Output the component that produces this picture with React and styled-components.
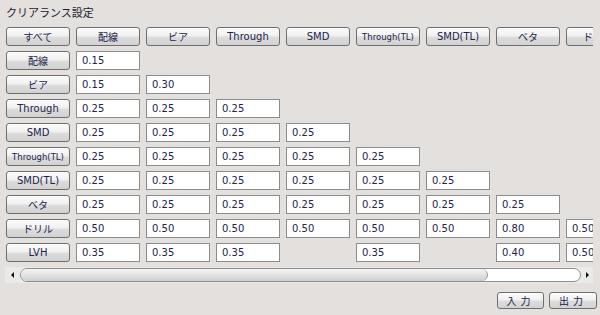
import React from "react";
import styled, { createGlobalStyle } from "styled-components";

const GlobalStyle = createGlobalStyle`
  html, body {
    margin: 0;
    padding: 0;
    background: #e3e0de;
  }
  body {
    font-family: "DejaVu Sans", "Noto Sans CJK JP", sans-serif;
    color: #23234a;
  }
`;

const Page = styled.div`
  width: 600px;
  height: 315px;
  box-sizing: border-box;
  padding: 4px 3px 0 5px;
  background: #e3e0de;
  overflow: hidden;
`;

const Title = styled.div`
  font-family: "Noto Sans CJK JP", sans-serif;
  font-size: 11px;
  line-height: 16px;
  height: 16px;
  margin-bottom: 7px;
  padding-left: 1px;
  color: #1c1c2c;
`;

const Viewport = styled.div`
  width: 588px;
  overflow: hidden;
`;

const Grid = styled.div`
  display: grid;
  grid-template-columns: repeat(9, 64px);
  grid-auto-rows: 19px;
  column-gap: 6px;
  row-gap: 5px;
  padding-left: 1px;
  width: max-content;
`;

const Btn = styled.div`
  box-sizing: border-box;
  height: ${(p) => p.$h || 19}px;
  width: ${(p) => (p.$w ? `${p.$w}px` : "auto")};
  border: 1px solid #6e6e6e;
  border-radius: 3px;
  background: linear-gradient(#fbfbfb 0%, #f1f1f1 45%, #dcdcdc 55%, #d2d2d2 100%);
  box-shadow: inset 0 1px 0 #ffffff;
  display: flex;
  align-items: center;
  justify-content: center;
  font-family: ${(p) =>
    p.$jp ? `"Noto Sans CJK JP", sans-serif` : `"DejaVu Sans", "Noto Sans CJK JP", sans-serif`};
  font-size: ${(p) => p.$fs || 10}px;
  letter-spacing: ${(p) => p.$ls || 0}px;
  color: #23234a;
  white-space: nowrap;
  overflow: hidden;
`;

const Cell = styled.div`
  box-sizing: border-box;
  height: 19px;
  border: 1px solid #8c8c8c;
  background: #ffffff;
  font-size: 10px;
  line-height: 17px;
  padding-left: 5px;
  color: #23234a;
  white-space: nowrap;
  overflow: hidden;
`;

const Empty = styled.div``;

const ScrollBar = styled.div`
  margin-top: 5px;
  width: 588px;
  height: 16px;
  background: #ebeae9;
  display: flex;
  align-items: center;
  box-sizing: border-box;
  padding: 0 4px 0 4px;
`;

const Arrow = styled.div`
  width: 0;
  height: 0;
  border-top: 3px solid transparent;
  border-bottom: 3px solid transparent;
  ${(p) =>
    p.$left
      ? "border-right: 3px solid #111; margin-right: 6px; margin-left: 2px;"
      : "border-left: 3px solid #111; margin-left: 5px;"}
`;

const Track = styled.div`
  flex: 1;
  height: 14px;
  box-sizing: border-box;
  border: 1px solid #8e8e8e;
  border-radius: 7px;
  background: #ffffff;
  display: flex;
  overflow: hidden;
`;

const Thumb = styled.div`
  height: 100%;
  border-right: 1px solid #9a9a9a;
  border-radius: 6px;
  background: linear-gradient(#f4f4f4 0%, #e2e2e2 50%, #cfcfcf 100%);
`;

const Footer = styled.div`
  display: flex;
  justify-content: flex-end;
  gap: 5px;
  margin-top: 9px;
`;

const cols = ["配線", "ビア", "Through", "SMD", "Through(TL)", "SMD(TL)", "ベタ", "ドリル"];

const rows = [
  { label: "配線", jp: true, values: ["0.15"] },
  { label: "ビア", jp: true, values: ["0.15", "0.30"] },
  { label: "Through", values: ["0.25", "0.25", "0.25"] },
  { label: "SMD", values: ["0.25", "0.25", "0.25", "0.25"] },
  { label: "Through(TL)", small: true, values: ["0.25", "0.25", "0.25", "0.25", "0.25"] },
  { label: "SMD(TL)", values: ["0.25", "0.25", "0.25", "0.25", "0.25", "0.25"] },
  { label: "ベタ", jp: true, values: ["0.25", "0.25", "0.25", "0.25", "0.25", "0.25", "0.25"] },
  { label: "ドリル", jp: true, values: ["0.50", "0.50", "0.50", "0.50", "0.50", "0.50", "0.80", "0.50"] },
  { label: "LVH", values: ["0.35", "0.35", "0.35", null, "0.35", null, "0.40", "0.50"] },
];

const isJp = (s) => /[\u3040-\u30ff\u4e00-\u9fff]/.test(s);

export default function App() {
  return (
    <>
      <GlobalStyle />
      <Page>
        <Title>クリアランス設定</Title>
        <Viewport>
          <Grid>
            <Btn $jp>すべて</Btn>
            {cols.map((c) => (
              <Btn key={c} $jp={isJp(c)} $fs={c === "Through(TL)" ? 8.5 : 10}>
                {c}
              </Btn>
            ))}
            {rows.map((r) => (
              <React.Fragment key={r.label}>
                <Btn $jp={r.jp} $fs={r.small ? 8.5 : 10}>
                  {r.label}
                </Btn>
                {r.values.map((v, i) =>
                  v ? <Cell key={i}>{v}</Cell> : <Empty key={i} />
                )}
                {Array.from({ length: 8 - r.values.length }).map((_, i) => (
                  <Empty key={`e${i}`} />
                ))}
              </React.Fragment>
            ))}
          </Grid>
        </Viewport>
        <ScrollBar>
          <Arrow $left />
          <Track>
            <Thumb style={{ width: `${(468 / 561) * 100}%` }} />
          </Track>
          <Arrow />
        </ScrollBar>
        <Footer>
          <Btn $jp $w={47} $h={17} $ls={4}>入力</Btn>
          <Btn $jp $w={48} $h={17} $ls={4}>出力</Btn>
        </Footer>
      </Page>
    </>
  );
}
